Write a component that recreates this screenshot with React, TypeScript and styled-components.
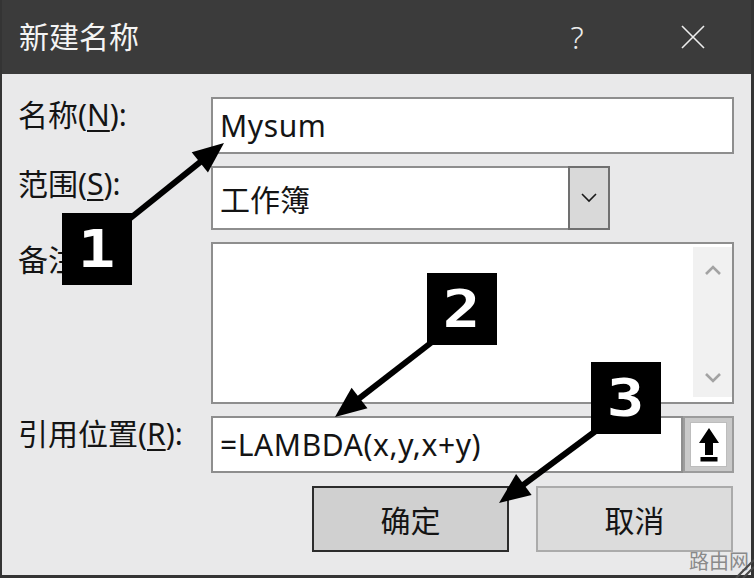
import * as React from 'react';
import styled, { createGlobalStyle } from 'styled-components';

const uiFont = `"Noto Sans", "Noto Sans CJK SC", sans-serif`;

const GlobalStyle = createGlobalStyle`
  html, body {
    margin: 0;
    padding: 0;
    background: #e9e9ea;
  }
  body {
    font-family: ${uiFont};
  }
`;

const Window = styled.div`
  position: relative;
  width: 754px;
  height: 578px;
  box-sizing: border-box;
  padding: 0 3px 3px 2px;
  background: #343434;
  display: flex;
  flex-direction: column;
  font-family: ${uiFont};
  overflow: hidden;
`;

const TitleBar = styled.header`
  height: 74px;
  flex: none;
  display: flex;
  align-items: center;
  background: #3b3b3b;
  color: #f4f4f4;
`;

const Title = styled.h1`
  flex: 1;
  margin: 0 0 0 17px;
  font-size: 30px;
  font-weight: 400;
  line-height: 1;
`;

const CaptionButton = styled.button`
  width: 116px;
  height: 100%;
  border: 0;
  padding: 0;
  background: transparent;
  color: #ececec;
  display: flex;
  align-items: center;
  justify-content: center;
  font-family: ${uiFont};
  font-size: 31px;
  font-weight: 300;
`;

const Body = styled.div`
  flex: 1;
  background: #e9e9ea;
  padding: 23px 17px 0 16px;
  display: flex;
  flex-direction: column;
`;

const Form = styled.div`
  display: grid;
  grid-template-columns: 193px 1fr;
  grid-template-rows: 57px 64px 162px 57px;
  row-gap: 12px;
`;

const Label = styled.label<{ $top?: number }>`
  font-size: 30px;
  line-height: 36px;
  color: #141414;
  padding-top: ${p => p.$top ?? 0}px;
  white-space: nowrap;

  & u {
    text-decoration-thickness: 2px;
    text-underline-offset: 4px;
  }
`;

const TextBox = styled.div`
  box-sizing: border-box;
  flex: 1;
  height: 100%;
  border: 2px solid #8e8e8e;
  background: #fff;
  display: flex;
  align-items: center;
  padding-left: 7px;
  font-size: 30px;
  letter-spacing: 0.6px;
  color: #141414;
  white-space: nowrap;
`;

const Combo = styled.div`
  display: flex;
  width: 399px;
  height: 100%;
`;

const ComboField = styled(TextBox)`
  border-right: 0;
  letter-spacing: 0;
`;

const DropButton = styled.div`
  box-sizing: border-box;
  width: 42px;
  height: 100%;
  border: 2px solid #707070;
  background: #d9d9d9;
  display: flex;
  align-items: center;
  justify-content: center;
`;

const NoteBox = styled.div`
  box-sizing: border-box;
  height: 100%;
  border: 2px solid #8e8e8e;
  background: #fff;
  display: flex;
  justify-content: flex-end;
  padding: 3px 0 5px;
`;

const ScrollBar = styled.div`
  width: 39px;
  background: #f1f1f1;
  display: flex;
  flex-direction: column;
  align-items: center;
  justify-content: space-between;
  padding: 18px 0 14px;
`;

const RefRow = styled.div`
  display: flex;
  height: 100%;
`;

const CollapseButton = styled.div`
  box-sizing: border-box;
  width: 51px;
  height: 100%;
  border: 2px solid #9c9c9c;
  background: #c9c9c9;
  padding: 4px 5px;
  display: flex;
`;

const CollapseFace = styled.div`
  flex: 1;
  background: #fff;
  border: 1px solid #bdbdbd;
  display: flex;
  align-items: center;
  justify-content: center;
`;

const ButtonRow = styled.div`
  display: flex;
  justify-content: flex-end;
  gap: 27px;
  margin: 13px 1px 0 0;
  height: 66px;
`;

const DialogButton = styled.button<{ $primary?: boolean }>`
  box-sizing: border-box;
  width: 197px;
  height: 100%;
  border: 2px solid ${p => (p.$primary ? '#2c2c2c' : '#ababab')};
  background: ${p => (p.$primary ? '#d0d0d0' : '#dcdcdc')};
  color: #141414;
  font-family: ${uiFont};
  font-size: 30px;
  padding: 0;
`;

const Watermark = styled.div`
  position: absolute;
  left: 689px;
  top: 552px;
  font-size: 20px;
  line-height: 1;
  color: #8a8a8a;
  white-space: nowrap;
`;

const Grip = styled.svg`
  position: absolute;
  right: 0;
  bottom: 0;
`;

const Overlay = styled.svg`
  position: absolute;
  left: 0;
  top: 0;
  pointer-events: none;
`;

const Badge = styled.div<{ $x: number; $y: number }>`
  position: absolute;
  left: ${p => p.$x}px;
  top: ${p => p.$y}px;
  width: 70px;
  height: 72px;
  background: #000;
  color: #fff;
  display: flex;
  align-items: center;
  justify-content: center;
  font-family: "DejaVu Sans Mono", monospace;
  font-weight: 700;
  font-size: 52px;
  line-height: 1;
`;

const Digit = styled.span`
  display: inline-block;
  transform: scale(1.2, 1);
`;

const Chevron = ({ dir, color, size = 16, weight = 2.6 }: { dir: 'up' | 'down'; color: string; size?: number; weight?: number }) => (
  <svg width={size} height={size / 2 + 2} viewBox="0 0 16 10">
    <polyline
      points={dir === 'down' ? '1,1 8,8 15,1' : '1,9 8,2 15,9'}
      fill="none"
      stroke={color}
      strokeWidth={weight}
    />
  </svg>
);

// thick annotation arrow: shaft plus a triangular head at (x2, y2)
const Arrow = ({ x1, y1, x2, y2 }: { x1: number; y1: number; x2: number; y2: number }) => {
  const len = Math.hypot(x2 - x1, y2 - y1);
  const ux = (x2 - x1) / len;
  const uy = (y2 - y1) / len;
  const head = 31;
  const half = 13;
  const bx = x2 - ux * head;
  const by = y2 - uy * head;
  const pts = [
    `${x2},${y2}`,
    `${bx - uy * half},${by + ux * half}`,
    `${bx + uy * half},${by - ux * half}`,
  ].join(' ');
  return (
    <g>
      <line x1={x1} y1={y1} x2={bx + ux * 2} y2={by + uy * 2} stroke="#000" strokeWidth={6} />
      <polygon points={pts} fill="#000" />
    </g>
  );
};

export default function App() {
  return (
    <Window>
      <GlobalStyle />
      <TitleBar>
        <Title>新建名称</Title>
        <CaptionButton>?</CaptionButton>
        <CaptionButton>
          <svg width="24" height="24" viewBox="0 0 24 24">
            <path d="M1 1 L23 23 M23 1 L1 23" stroke="#ededed" strokeWidth={1.6} />
          </svg>
        </CaptionButton>
      </TitleBar>
      <Body>
        <Form>
          <Label>
            名称(<u>N</u>):
          </Label>
          <TextBox>Mysum</TextBox>

          <Label>
            范围(<u>S</u>):
          </Label>
          <Combo>
            <ComboField>工作簿</ComboField>
            <DropButton>
              <Chevron dir="down" color="#1a1a1a" size={16} weight={1.6} />
            </DropButton>
          </Combo>

          <Label>
            备注(<u>O</u>):
          </Label>
          <NoteBox>
            <ScrollBar>
              <Chevron dir="up" color="#a3a3a3" />
              <Chevron dir="down" color="#a3a3a3" />
            </ScrollBar>
          </NoteBox>

          <Label>
            引用位置(<u>R</u>):
          </Label>
          <RefRow>
            <TextBox>=LAMBDA(x,y,x+y)</TextBox>
            <CollapseButton>
              <CollapseFace>
                <svg width="22" height="34" viewBox="0 0 22 34">
                  <polygon points="11,0 21,15 15,15 15,27 7,27 7,15 1,15" fill="#000" />
                  <rect x="2.5" y="29" width="17" height="4.5" fill="#000" />
                </svg>
              </CollapseFace>
            </CollapseButton>
          </RefRow>
        </Form>
        <ButtonRow>
          <DialogButton $primary>确定</DialogButton>
          <DialogButton>取消</DialogButton>
        </ButtonRow>
      </Body>

      <Watermark>路由网</Watermark>
      <Grip width="24" height="24" viewBox="0 0 24 24">
        <path d="M6 24 L24 6 M13 24 L24 13" stroke="#4a4a4a" strokeWidth={2.2} />
      </Grip>

      <Overlay width="754" height="578">
        <Arrow x1={128} y1={220} x2={224} y2={143} />
        <Arrow x1={432} y1={342} x2={335} y2={417} />
        <Arrow x1={597} y1={430} x2={499} y2={503} />
      </Overlay>
      <Badge $x={62} $y={213}>
        <Digit>1</Digit>
      </Badge>
      <Badge $x={427} $y={273}>
        <Digit>2</Digit>
      </Badge>
      <Badge $x={591} $y={362}>
        <Digit>3</Digit>
      </Badge>
    </Window>
  );
}
